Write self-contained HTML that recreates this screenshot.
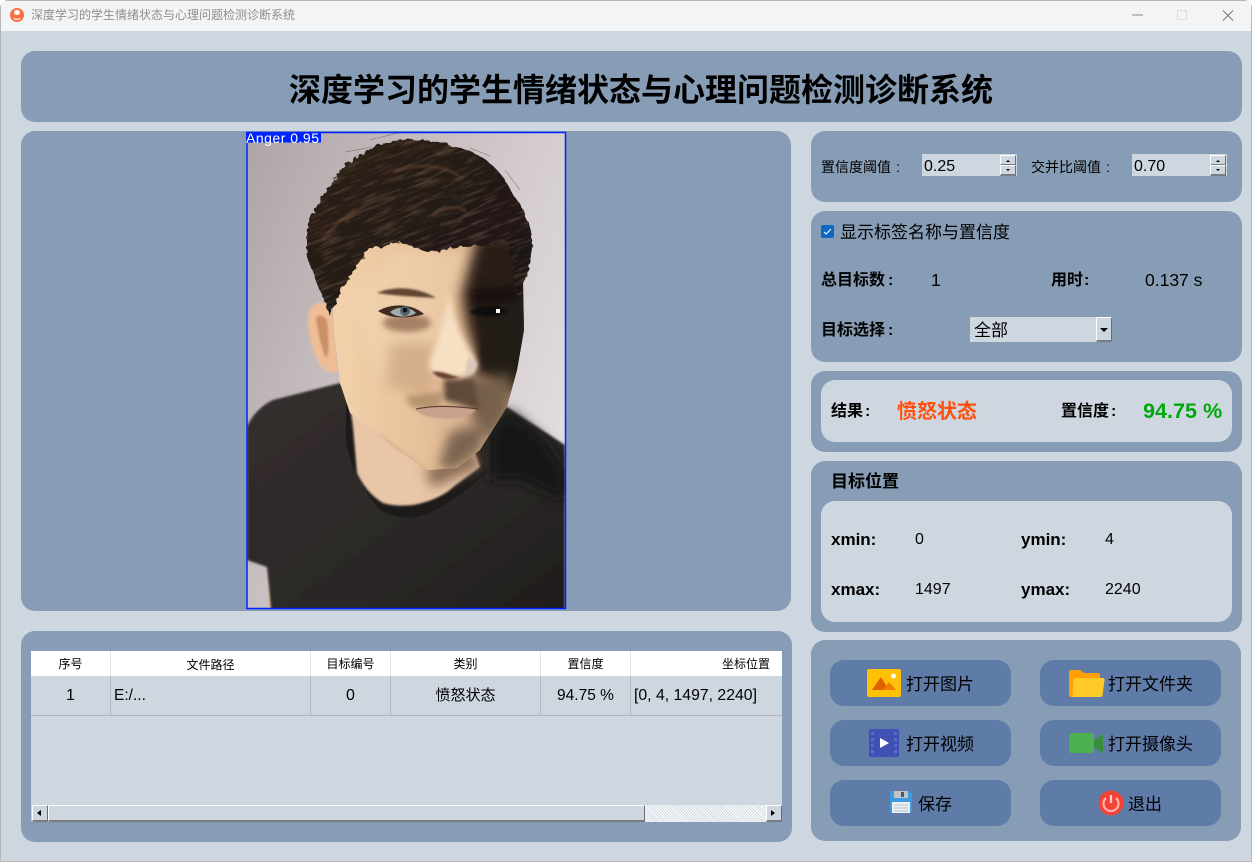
<!DOCTYPE html>
<html lang="zh"><head><meta charset="utf-8"><title>深度学习的学生情绪状态与心理问题检测诊断系统</title>
<style>
html,body{margin:0;padding:0;width:1252px;height:862px;overflow:hidden;background:#fff}
body{position:relative;font-family:"Liberation Sans","Noto Sans CJK SC",sans-serif;color:#000}
div,span{position:absolute;box-sizing:border-box}
i{font-style:normal}
#win{left:0;top:0;width:1252px;height:862px;background:#ced6e0;border:1px solid #b4b6b8;border-radius:8px 8px 0 0;overflow:hidden}
#bar{left:0;top:0;width:1250px;height:30px;background:#f2f4f6}
.p{background:#879db5;border-radius:14px}
.in{background:#ced6e0;border-radius:14px}
.t{white-space:nowrap;line-height:24px;height:24px}
.b{font-weight:bold}
.btn{background:#5f7ba8;border-radius:14px;width:181px;height:46px}
.sb{background:#ced6e0;border-right:1px solid #6b6f75;border-bottom:2px solid #7a7e84;border-top:1px solid #fff;border-left:1px solid #fff}
.c{text-align:center}
.v{background:#b3b9c3;width:1px}
svg{position:absolute;left:0;top:0;overflow:visible}
</style></head><body>
<div id="win"></div>
<div id="bar" style="left:1px;top:1px"></div>
<svg width="1252" height="31" style="z-index:2">
<circle cx="17" cy="15" r="7" fill="#ff6e40"/><path d="M14 12.500a3 2.500 0 0 1 6 0 3 2.500 0 0 1-6 0z" fill="#fff"/><path d="M12.500 16.500c1.500 3 7.500 3 9 0l-2 3.200h-5z" fill="#fff"/>
<path d="M1132 15h11" stroke="#8b8b8b"/><rect x="1177.500" y="10.500" width="9" height="9" fill="none" stroke="#dcdcdc"/><path d="M1223 10.500l10 10M1233 10.500l-10 10" stroke="#777"/>
</svg>
<div class="t" style="left:31px;top:3px;font-size:12px;color:#8e8e8e;z-index:2">深度学习的学生情绪状态与心理问题检测诊断系统</div>

<div class="p" style="left:21px;top:51px;width:1221px;height:71px"></div>
<div class="t b" style="left:289px;top:67px;height:46px;font-size:32px;line-height:46px">深度学习的学生情绪状态与心理问题检测诊断系统</div>

<div class="p" style="left:21px;top:131px;width:770px;height:480px"></div>

<svg width="1252" height="862" viewBox="0 0 1252 862">
<defs>
<linearGradient id="bg" x1="0" y1="0" x2="1" y2="0.6"><stop offset="0" stop-color="#aea4a6"/><stop offset=".5" stop-color="#cbc2c4"/><stop offset="1" stop-color="#e2dcde"/></linearGradient>
<linearGradient id="skin" x1="0" y1="0" x2="1" y2="0"><stop offset="0" stop-color="#f3d3ad"/><stop offset=".5" stop-color="#e6c09a"/><stop offset="1" stop-color="#c49c7c"/></linearGradient>
<linearGradient id="shirt" x1="0" y1="0" x2="1" y2="1"><stop offset="0" stop-color="#332f2e"/><stop offset=".6" stop-color="#2b2827"/><stop offset="1" stop-color="#1e1c1b"/></linearGradient>
<linearGradient id="hair" x1="0" y1="0" x2="1" y2="1"><stop offset="0" stop-color="#2f231b"/><stop offset=".5" stop-color="#241a14"/><stop offset="1" stop-color="#1a1411"/></linearGradient>
<filter id="b1" x="-20%" y="-20%" width="140%" height="140%"><feGaussianBlur stdDeviation="1"/></filter>
<filter id="b3" x="-50%" y="-50%" width="200%" height="200%"><feGaussianBlur stdDeviation="3"/></filter>
<filter id="b6" x="-60%" y="-60%" width="220%" height="220%"><feGaussianBlur stdDeviation="6"/></filter>
<filter id="fray" x="-10%" y="-10%" width="120%" height="120%"><feTurbulence type="fractalNoise" baseFrequency=".14" numOctaves="2" seed="4"/><feDisplacementMap in="SourceGraphic" scale="7"/></filter>
<filter id="streak" x="0" y="0" width="100%" height="100%"><feTurbulence type="fractalNoise" baseFrequency=".035 .28" numOctaves="3" seed="9"/><feColorMatrix values="0 0 0 0 .5  0 0 0 0 .33  0 0 0 0 .2  1.9 0 0 0 -.9"/></filter>
<clipPath id="ph"><rect x="247" y="133" width="318" height="475"/></clipPath>
<clipPath id="fc"><path d="M330 235H522L524 330 517 370 507 407 480 450 457 468 427 470 397 450 350 413 340 383 334 330z"/></clipPath>
<clipPath id="hc"><path d="M307 235C310 218 318 198 340 172 352 158 372 146 390 142 412 138 440 140 457 147 478 152 500 165 513 195 524 208 532 225 532 252 530 270 524 282 520 300L516 292 511 260 507 242 473 245 427 252 400 242 370 248 353 272 337 298 330 316 317 282 307 258z"/></clipPath>
</defs>
<g clip-path="url(#ph)">
<rect x="247" y="133" width="318" height="475" fill="url(#bg)"/>
<path d="M270 585l11 23h-11z" fill="#c89a6c"/>
<path d="M247 427C252 415 262 405 273 400L340 383 400 440 507 407 565 445V615H272L267 567 247 560z" fill="url(#shirt)" filter="url(#b1)"/>
<path d="M490 430L510 410 545 440 565 470V500L520 480 490 480z" fill="#171514" filter="url(#b6)"/>
<path d="M346 405L346 425C344 450 354 480 380 510 392 516 400 518 407 518 425 518 447 507 487 473L480 440 400 430z" fill="#1d1b1a"/>
<path d="M350 405L353 427 357 473C365 490 375 498 383 503 393 506 403 506 413 505 430 502 445 495 453 487L480 467 470 440 400 430z" fill="#e9c6a7" filter="url(#b1)"/>
<path d="M432 488L482 466 472 448 425 468z" fill="#8a6c54" filter="url(#b6)"/>
<path d="M309 312C312 302 322 300 332 306L338 372C325 374 320 368 314 352 310 340 306 325 309 312z" fill="#eebd96" filter="url(#b1)"/>
<path d="M316 318C322 312 328 318 328 330 328 342 330 352 326 358 320 345 318 330 316 318z" fill="#c98f68" filter="url(#b1)"/>
<g clip-path="url(#fc)">
<rect x="325" y="230" width="205" height="245" fill="url(#skin)"/>
<path d="M400 250H470L462 275 455 300 440 340 425 385 380 380 350 300z" fill="#f2d6b4" opacity=".5" filter="url(#b6)"/>
<path d="M390 345C410 340 425 345 438 345L430 395 385 385z" fill="#b98d6a" opacity=".45" filter="url(#b6)"/>
<ellipse cx="407" cy="323" rx="24" ry="9" fill="#8a6148" opacity=".7" filter="url(#b3)"/>
<path d="M478 235H530V375L512 395 470 372 476 355 466 320 462 295z" fill="#2a1e16" filter="url(#b6)"/>
<path d="M484 280H526V370L505 385 480 360z" fill="#241a13" filter="url(#b3)"/>
<path d="M465 378L512 375 510 412 490 440 472 420z" fill="#77604c" filter="url(#b6)"/>
<path d="M444 378L474 378 480 410 444 400z" fill="#5f4a38" filter="url(#b3)"/>
<path d="M450 432L490 422 478 452 455 470 438 468z" fill="#7a6450" filter="url(#b6)"/>
<path d="M378 432C395 448 415 462 430 470 415 470 400 460 385 448z" fill="#c89a78" opacity=".6" filter="url(#b3)"/>
<path d="M405 396L445 392 438 408 412 408z" fill="#a58561" opacity=".75" filter="url(#b3)"/>
<path d="M449 292C454 322 464 342 474 356 482 368 476 376 458 377 444 378 428 376 429 362 436 345 444 322 449 292z" fill="#f6dfc2" filter="url(#b3)"/>
<path d="M432 372C444 370 452 377 460 377 450 381 440 380 432 372z" fill="#6a3f30" filter="url(#b1)"/>
<path d="M468 356l9 8-4 9-8 3z" fill="#dcc8ba" filter="url(#b1)"/>
<path d="M377 293C395 285 420 288 436 298 420 297 395 296 377 293z" fill="#5f4433" filter="url(#b1)"/>
<path d="M472 292L516 288 516 300 474 302z" fill="#140e0b" filter="url(#b3)"/>
<path d="M378 311C390 304 410 302 424 314 412 318 392 320 378 311z" fill="#3f2a20"/>
<path d="M390 312C397 306 410 306 416 313 408 318 396 318 390 312z" fill="#a0abad"/>
<circle cx="405" cy="311" r="5" fill="#54656c"/><circle cx="405" cy="310" r="2.400" fill="#111"/>
<path d="M470 312C480 304 498 304 508 311 498 318 480 318 470 312z" fill="#0c0908" filter="url(#b1)"/>
<rect x="496" y="309" width="4" height="4" fill="#fff"/>
<path d="M416 410C430 405 455 405 477 409 470 418 450 420 435 418 425 417 420 414 416 410z" fill="#c99f8e" filter="url(#b1)"/>
<path d="M416 409C435 405 455 406 478 409" stroke="#4f3327" stroke-width="1.300" fill="none" opacity=".85"/>
</g>
<path d="M307 235C310 218 318 198 340 172 352 158 372 146 390 142 412 138 440 140 457 147 478 152 500 165 513 195 524 208 532 225 532 252 530 270 524 282 520 300L516 292 511 260 507 242 473 245 427 252 400 242 370 248 353 272 337 298 330 316 317 282 307 258z" fill="url(#hair)" filter="url(#fray)"/>
<g clip-path="url(#hc)" opacity=".4"><rect x="260" y="100" width="320" height="240" transform="rotate(-22 420 220)" filter="url(#streak)"/></g>
<path d="M345 222C360 205 380 197 395 198M432 216C445 206 460 205 466 212M440 225L462 220M322 240C335 225 345 216 355 210M395 172C420 162 440 165 460 176" stroke="#6b4a35" stroke-width="2.500" fill="none" opacity=".6" filter="url(#b1)"/>
<path d="M370 140C385 136 395 134 410 130M345 152L372 147M470 148L490 156M505 170L520 190" stroke="#5f514c" stroke-width=".7" fill="none" opacity=".5"/>
</g>
<rect x="247" y="132.500" width="318.500" height="476" fill="none" stroke="#0024ff" stroke-width="1.500"/>
<rect x="246" y="132" width="75" height="10.500" fill="#0024ff"/>
</svg>
<div class="t" style="left:246px;top:126px;font-size:14px;letter-spacing:.5px;color:#fff">Anger 0.95</div>

<div class="p" style="left:21px;top:631px;width:771px;height:211px"></div>
<div style="left:31px;top:651px;width:751px;height:170px;background:#ced6e0"></div>
<div style="left:31px;top:651px;width:751px;height:25px;background:#fff"></div>
<div style="left:31px;top:715px;width:751px;height:1px;background:#aeb4be"></div>
<div class="v" style="left:110px;top:676px;height:40px"></div><div class="v" style="left:310px;top:676px;height:40px"></div><div class="v" style="left:390px;top:676px;height:40px"></div><div class="v" style="left:540px;top:676px;height:40px"></div><div class="v" style="left:630px;top:676px;height:40px"></div>
<div style="left:110px;top:651px;width:1px;height:25px;background:#e2e4e6"></div><div style="left:310px;top:651px;width:1px;height:25px;background:#e2e4e6"></div><div style="left:390px;top:651px;width:1px;height:25px;background:#e2e4e6"></div><div style="left:540px;top:651px;width:1px;height:25px;background:#e2e4e6"></div><div style="left:630px;top:651px;width:1px;height:25px;background:#e2e4e6"></div>
<div class="t c" style="left:31px;top:652px;width:79px;font-size:12px">序号</div>
<div class="t c" style="left:111px;top:653px;width:199px;font-size:12px">文件路径</div>
<div class="t c" style="left:311px;top:652px;width:79px;font-size:12px">目标编号</div>
<div class="t c" style="left:391px;top:652px;width:149px;font-size:12px">类别</div>
<div class="t c" style="left:541px;top:652px;width:89px;font-size:12px">置信度</div>
<div class="t" style="left:722px;top:652px;font-size:12px">坐标位置</div>
<div class="t c" style="left:31px;top:684px;width:79px;font-size:16px">1</div>
<div class="t" style="left:114px;top:684px;font-size:15.500px">E:/...</div>
<div class="t c" style="left:311px;top:684px;width:79px;font-size:16px">0</div>
<div class="t c" style="left:391px;top:684px;width:149px;font-size:15px">愤怒状态</div>
<div class="t c" style="left:541px;top:684px;width:89px;font-size:15.500px">94.75 %</div>
<div class="t" style="left:634px;top:684px;font-size:15.800px">[0, 4, 1497, 2240]</div>
<div class="sb" style="left:32px;top:805px;width:16px;height:17px"></div>
<div class="sb" style="left:48px;top:805px;width:597px;height:17px"></div>
<div style="left:645px;top:805px;width:121px;height:17px;background-color:#ced6e0;background-image:repeating-linear-gradient(45deg,#fff 0 1px,#ced6e0 1px 2px)"></div>
<div class="sb" style="left:766px;top:805px;width:16px;height:17px"></div>
<svg width="1252" height="862"><path d="M41 810v6l-4-3zM771 810v6l4-3z" fill="#000"/></svg>

<div class="p" style="left:811px;top:131px;width:431px;height:71px"></div>
<div class="t" style="left:821px;top:155px;font-size:14px">置信度阈值<i style="margin-left:5px">:</i></div>
<div style="left:922px;top:154px;width:95px;height:22px;background:#ced6e0"></div>
<div class="t" style="left:924px;top:155px;font-size:16px">0.25</div>
<div class="t" style="left:1031px;top:155px;font-size:14px">交并比阈值<i style="margin-left:5px">:</i></div>
<div style="left:1132px;top:154px;width:95px;height:22px;background:#ced6e0"></div>
<div class="t" style="left:1134px;top:155px;font-size:16px">0.70</div>
<div class="sb" style="left:1000px;top:155px;width:16px;height:10px;border-bottom-width:1px"></div><div class="sb" style="left:1000px;top:165px;width:16px;height:11px"></div>
<div class="sb" style="left:1210px;top:155px;width:16px;height:10px;border-bottom-width:1px"></div><div class="sb" style="left:1210px;top:165px;width:16px;height:11px"></div>
<svg width="1252" height="862"><path d="M1006 162h4l-2-2zM1006 169h4l-2 2zM1216 162h4l-2-2zM1216 169h4l-2 2z" fill="#000"/></svg>

<div class="p" style="left:811px;top:211px;width:431px;height:151px"></div>
<div style="left:821px;top:225px;width:13px;height:13px;background:#0f68c0;border-radius:2px"></div>
<svg width="1252" height="862"><path d="M824 232l2 2 5-5" stroke="#fff" stroke-width="1" fill="none"/></svg>
<div class="t" style="left:840px;top:221px;font-size:17px">显示标签名称与置信度</div>
<div class="t b" style="left:821px;top:269px;font-size:16px">总目标数<i style="margin-left:3px">:</i></div>
<div class="t" style="left:931px;top:268px;font-size:17.500px">1</div>
<div class="t b" style="left:1051px;top:269px;font-size:16px">用时<i style="margin-left:1px">:</i></div>
<div class="t" style="left:1145px;top:268px;font-size:17.500px">0.137 s</div>
<div class="t b" style="left:821px;top:319px;font-size:16px">目标选择<i style="margin-left:3px">:</i></div>
<div style="left:970px;top:317px;width:142px;height:25px;background:#ced6e0"></div>
<div class="t" style="left:974px;top:319px;font-size:17px">全部</div>
<div class="sb" style="left:1096px;top:317px;width:16px;height:25px"></div>
<svg width="1252" height="862"><path d="M1100 328h8l-4 4z" fill="#000"/></svg>

<div class="p" style="left:811px;top:371px;width:431px;height:81px"></div>
<div class="in" style="left:821px;top:380px;width:411px;height:62px"></div>
<div class="t b" style="left:831px;top:400px;font-size:16px">结果<i style="margin-left:2px">:</i></div>
<div class="t b" style="left:897px;top:400px;font-size:20px;color:#ff5010">愤怒状态</div>
<div class="t b" style="left:1061px;top:400px;font-size:16px">置信度<i style="margin-left:2px">:</i></div>
<div class="t b" style="left:1143px;top:399px;font-size:21.600px;color:#00a80e">94.75 %</div>

<div class="p" style="left:811px;top:461px;width:431px;height:171px"></div>
<div class="t b" style="left:831px;top:470px;font-size:17px">目标位置</div>
<div class="in" style="left:821px;top:501px;width:411px;height:121px"></div>
<div class="t b" style="left:831px;top:528px;font-size:17px">xmin:</div>
<div class="t" style="left:915px;top:528px;font-size:16px">0</div>
<div class="t b" style="left:1021px;top:528px;font-size:17px">ymin:</div>
<div class="t" style="left:1105px;top:528px;font-size:16px">4</div>
<div class="t b" style="left:831px;top:578px;font-size:17px">xmax:</div>
<div class="t" style="left:915px;top:578px;font-size:16px">1497</div>
<div class="t b" style="left:1021px;top:578px;font-size:17px">ymax:</div>
<div class="t" style="left:1105px;top:578px;font-size:16px">2240</div>

<div class="p" style="left:811px;top:640px;width:430px;height:201px"></div>
<div class="btn" style="left:830px;top:660px"></div><div class="btn" style="left:1040px;top:660px"></div>
<div class="btn" style="left:830px;top:720px"></div><div class="btn" style="left:1040px;top:720px"></div>
<div class="btn" style="left:830px;top:780px"></div><div class="btn" style="left:1040px;top:780px"></div>
<svg width="1252" height="862">
<rect x="867" y="669" width="34" height="28" rx="2" fill="#ffc107"/><path d="M872 690l9-13 8 13z" fill="#dd6200"/><path d="M883 690l6-8 7 8z" fill="#f57c00"/><circle cx="893.500" cy="676" r="2.500" fill="#fff"/>
<path d="M1069 672a2 2 0 0 1 2-2h9l4 3h14a2 2 0 0 1 2 2v22h-29a2 2 0 0 1-2-2z" fill="#ffa000"/><path d="M1075 678h27a2 2 0 0 1 2.500 2.500l-2 15a2 2 0 0 1-2 1.500h-28l1-17a2 2 0 0 1 1.500-2z" fill="#ffca28"/>
<rect x="869" y="729" width="30" height="28" fill="#3f51b5"/><path d="M871 732h3v3h-3zM871 738h3v3h-3zM871 744h3v3h-3zM871 750h3v3h-3zM894 732h3v3h-3zM894 738h3v3h-3zM894 744h3v3h-3zM894 750h3v3h-3z" fill="#5c6bc0"/><path d="M880 738l9 5-9 5z" fill="#fff"/>
<rect x="1069" y="733" width="25" height="20" rx="2" fill="#4caf50"/><path d="M1094 740l9-6v19l-9-6z" fill="#388e3c"/>
<path d="M890 791h19l3 3v19h-22z" fill="#3f9ae0"/><rect x="894" y="791" width="14" height="7" fill="#c0c4c8"/><rect x="901" y="792" width="3" height="5" fill="#555"/><rect x="892" y="802" width="18" height="11" fill="#eef1f4"/><path d="M894 805h14M894 808h14M894 811h14" stroke="#b6c0ca"/>
<circle cx="1111" cy="803" r="12.500" fill="#f44336"/><path d="M1106 798a7.500 7.500 0 1 0 10 0" stroke="#ffb3ab" stroke-width="2.200" fill="none"/><path d="M1111 795v8" stroke="#ffd0cb" stroke-width="2.200"/>
</svg>
<div class="t" style="left:906px;top:673px;font-size:17px">打开图片</div>
<div class="t" style="left:1108px;top:673px;font-size:17px">打开文件夹</div>
<div class="t" style="left:906px;top:733px;font-size:17px">打开视频</div>
<div class="t" style="left:1108px;top:733px;font-size:17px">打开摄像头</div>
<div class="t" style="left:918px;top:793px;font-size:17px">保存</div>
<div class="t" style="left:1128px;top:793px;font-size:17px">退出</div>
</body></html>
